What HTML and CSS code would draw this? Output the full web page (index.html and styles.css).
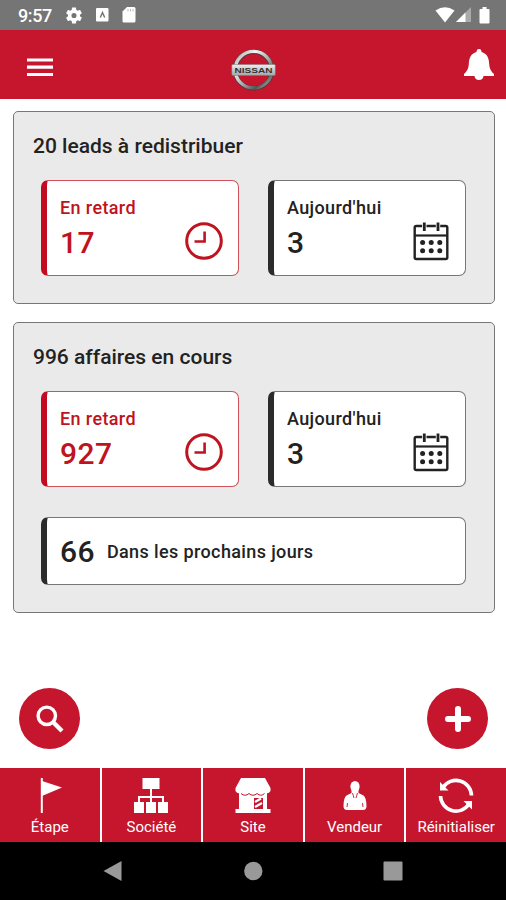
FILE: index.html
```
<!DOCTYPE html>
<html lang="fr">

<head>
    <meta charset="utf-8">
    <meta name="viewport" content="width=device-width, initial-scale=1.0">
    <title>Leads</title>
    <link rel="stylesheet" href="styles.css">
</head>

<body>
    <!-- shared icons -->
    <svg class="hide">
        <symbol id="clock" viewBox="0 0 38 38">
            <circle cx="19" cy="19" r="17.3" fill="none" stroke="currentColor" stroke-width="3" />
            <path d="M19.6 9.5V19.5H9.5" fill="none" stroke="currentColor" stroke-width="2.6" />
        </symbol>
        <symbol id="calendar" viewBox="0 0 36 39">
            <rect x="1.7" y="4" width="32.6" height="33" rx="1.5" fill="none" stroke="currentColor" stroke-width="2.4" />
            <path d="M2 13.5H34" stroke="currentColor" stroke-width="2.2" />
            <path d="M11.3 0V9M25 0V9" stroke="#fff" stroke-width="4.4" />
            <path d="M11.3 .5V9M25 .5V9" stroke="currentColor" stroke-width="2.8" />
            <g fill="currentColor">
                <circle cx="9.6" cy="20.5" r="2.5" />
                <circle cx="18.2" cy="20.5" r="2.5" />
                <circle cx="26.8" cy="20.5" r="2.5" />
                <circle cx="9.6" cy="28.7" r="2.5" />
                <circle cx="18.2" cy="28.7" r="2.5" />
                <circle cx="26.8" cy="28.7" r="2.5" />
            </g>
        </symbol>
    </svg>

    <div class="status">
        <span class="time">9:57</span>
        <svg class="gear" width="16" height="17" viewBox="2 2 20 20">
            <path fill="#fff" d="M19.43 12.98c.04-.32.07-.64.07-.98s-.03-.66-.07-.98l2.11-1.65c.19-.15.24-.42.12-.64l-2-3.46c-.12-.22-.39-.3-.61-.22l-2.49 1c-.52-.4-1.08-.73-1.69-.98l-.38-2.65C14.46 2.18 14.25 2 14 2h-4c-.25 0-.46.18-.49.42l-.38 2.65c-.61.25-1.17.59-1.69.98l-2.49-1c-.23-.09-.49 0-.61.22l-2 3.46c-.13.22-.07.49.12.64l2.11 1.65c-.04.32-.07.65-.07.98s.03.66.07.98l-2.11 1.65c-.19.15-.24.42-.12.64l2 3.46c.12.22.39.3.61.22l2.49-1c.52.4 1.08.73 1.69.98l.38 2.65c.03.24.24.42.49.42h4c.25 0 .46-.18.49-.42l.38-2.65c.61-.25 1.17-.59 1.69-.98l2.49 1c.23.09.49 0 .61-.22l2-3.46c.12-.22.07-.49-.12-.64l-2.11-1.65zM12 15.2a3.2 3.2 0 1 1 0-6.4 3.2 3.2 0 0 1 0 6.4z" />
        </svg>
        <svg class="keyboard" width="13" height="14" viewBox="0 0 13 14">
            <rect width="12.500" height="13.5" rx="1" fill="#fff" />
            <path d="M4.300 9.500L6.500 4.500L8.700 9.500" fill="none" stroke="#777" stroke-width="1.5" />
        </svg>
        <svg class="sd" width="14" height="16" viewBox="0 0 14 16">
            <path fill="#fff" d="M5 0H12Q13.5 0 13.5 1.5V14Q13.5 15.500 12 15.500H2Q.5 15.500 .5 14V4.500z" />
            <path d="M6 2V4.500M8.500 2V4.500M11 2V4.500" stroke="#bbb" />
        </svg>
        <svg class="wifi" width="20" height="16" viewBox="0 0 20 16">
            <path fill="#fff" d="M.5 3.500Q10-3 19.500 3.500L10 15.500z" />
        </svg>
        <svg class="signal" width="15" height="16" viewBox="0 0 15 16">
            <path fill="#aaa" d="M15 0V15H0z" />
            <path fill="#fff" d="M9.500 5.500V15H0z" />
        </svg>
        <svg class="battery" width="11" height="17" viewBox="0 0 11 17">
            <path fill="#fff" d="M3.500 0H7.500V2H9.500Q10.500 2 10.500 3V15.500Q10.500 16.500 9.500 16.500H1.500Q.5 16.500 .5 15.500V3Q.5 2 1.500 2H3.500z" />
        </svg>
    </div>

    <header class="header">
        <svg width="26" height="19" viewBox="0 0 26 19">
            <path d="M0 2H26M0 9.200H26M0 16.500H26" stroke="#fff" stroke-width="3.200" />
        </svg>
        <svg class="logo" width="46" height="42" viewBox="0 0 46 42">
            <defs>
                <linearGradient id="chrome" x1="0" y1="0" x2="1" y2="1">
                    <stop offset="0" stop-color="#999" />
                    <stop offset=".28" stop-color="#f5f5f5" />
                    <stop offset=".55" stop-color="#aaa" />
                    <stop offset=".78" stop-color="#555" />
                    <stop offset="1" stop-color="#ccc" />
                </linearGradient>
                <linearGradient id="plate" x1="0" y1="0" x2="0" y2="1">
                    <stop offset="0" stop-color="#eee" />
                    <stop offset="1" stop-color="#a5a5a5" />
                </linearGradient>
            </defs>
            <circle cx="22.500" cy="21" r="18.300" fill="none" stroke="#4b3a3c" stroke-width="4.600" />
            <circle cx="22.500" cy="20.700" r="18.300" fill="none" stroke="url(#chrome)" stroke-width="3.400" />
            <rect x=".8" y="15.500" width="43.500" height="11" rx="1" fill="url(#plate)" stroke="#777" stroke-width=".5" />
            <text x="22.500" y="23.900" text-anchor="middle" textLength="38" lengthAdjust="spacingAndGlyphs" class="brand">NISSAN</text>
        </svg>
        <svg class="bell" width="30" height="32" viewBox="0 0 30 32">
            <path fill="#fff" d="M15 0Q17.500 0 17.500 3C23 4.500 25 9 25.200 15C25.500 20 27 22 30 25V27H19.500Q19 31 15 31T10.500 27H0V25C3 22 4.500 20 4.800 15C5 9 7 4.500 12.500 3Q12.500 0 15 0z" />
        </svg>
    </header>

    <main class="content">
        <section class="panel">
            <h2>20 leads à redistribuer</h2>
            <div class="cards">
                <article class="card late">
                    <div>
                        <p class="label">En retard</p>
                        <p class="number">17</p>
                    </div>
                    <svg class="clock"><use href="#clock" /></svg>
                </article>
                <article class="card">
                    <div>
                        <p class="label">Aujourd'hui</p>
                        <p class="number">3</p>
                    </div>
                    <svg class="calendar"><use href="#calendar" /></svg>
                </article>
            </div>
        </section>

        <section class="panel">
            <h2>996 affaires en cours</h2>
            <div class="cards">
                <article class="card late">
                    <div>
                        <p class="label">En retard</p>
                        <p class="number">927</p>
                    </div>
                    <svg class="clock"><use href="#clock" /></svg>
                </article>
                <article class="card">
                    <div>
                        <p class="label">Aujourd'hui</p>
                        <p class="number">3</p>
                    </div>
                    <svg class="calendar"><use href="#calendar" /></svg>
                </article>
                <article class="card wide">
                    <p class="number">66</p>
                    <p class="label">Dans les prochains jours</p>
                </article>
            </div>
        </section>
    </main>

    <div class="actions">
        <button class="round">
            <svg width="28" height="28" viewBox="0 0 28 28" fill="none" stroke="#fff">
                <circle cx="10.800" cy="10.800" r="8.700" stroke-width="3.400" />
                <path d="M17 17L26 26" stroke-width="4.400" />
            </svg>
        </button>
        <button class="round">
            <svg width="26" height="26" viewBox="0 0 26 26">
                <path d="M13 3V23M3 13H23" stroke="#fff" stroke-width="6" stroke-linecap="round" />
            </svg>
        </button>
    </div>

    <nav class="menu">
        <a class="tab">
            <svg width="36" height="36" viewBox="0 0 36 36">
                <path d="M9.800 0V35" stroke="#fff" stroke-width="2" />
                <path d="M10 3L30 9.500L10 18z" fill="#fff" />
            </svg>
            Étape
        </a>
        <a class="tab">
            <svg width="36" height="36" viewBox="0 0 36 36">
                <path d="M9.500 0H26.500V11H9.500zM1 24H11V35H1zM13 24H23V35H13zM25 24H35V35H25z" fill="#fff" />
                <path d="M18 10V25M6 25V19H30V25" fill="none" stroke="#fff" stroke-width="2" />
            </svg>
            Société
        </a>
        <a class="tab">
            <svg width="36" height="36" viewBox="0 0 36 36">
                <path d="M6 0H30L35.500 10V13Q33 17 29.500 14Q26 18 22 14Q18 18 14 14Q10 18 6.500 14Q3 17 .5 13V10z" fill="#fff" />
                <path d="M4 14H32V31H35.500V35H.5V31H4z" fill="#fff" />
                <path d="M6 15.500Q10 19 14 15.500Q18 19 22 15.500Q26 19 29.500 15.500" fill="none" stroke="#c5162e" />
                <path d="M19 20H28V31H19z" fill="#c5162e" />
                <path d="M20 24L26 20.500M20 29L27 25" stroke="#fff" stroke-width="2.400" />
            </svg>
            Site
        </a>
        <a class="tab">
            <svg width="36" height="36" viewBox="0 0 36 36">
                <ellipse cx="18" cy="8.500" rx="4.600" ry="5.500" fill="#fff" />
                <path d="M14.500 11V15L9.500 17.500Q6.500 20 6.500 28Q6.500 32 10 32H26Q29.500 32 29.500 28Q29.500 20 26.500 17.500L21.500 15V11z" fill="#fff" />
                <path d="M15.500 15L17 20M20.500 15L19 20M10.500 25L10 29M25.500 25L26 29" stroke="#c5162e" stroke-width=".9" />
            </svg>
            Vendeur
        </a>
        <a class="tab">
            <svg width="36" height="36" viewBox="0 0 36 36">
                <path d="M5 9.500A15.500 15.500 0 0 1 33.500 17.500M31 26A15.500 15.500 0 0 1 2.500 18" fill="none" stroke="#fff" stroke-width="3.600" />
                <path d="M2 4V12.500H10.500zM34 31.500V23H25.500z" fill="#fff" />
            </svg>
            Réinitialiser
        </a>
    </nav>

    <footer class="system">
        <svg width="20" height="22" viewBox="0 0 20 22"><path d="M18.500 1V21L.5 11z" fill="#999" /></svg>
        <svg width="20" height="22" viewBox="0 0 20 22"><circle cx="10.300" cy="11" r="9.200" fill="#999" /></svg>
        <svg width="20" height="22" viewBox="0 0 20 22"><rect x=".5" y="1.500" width="19" height="19" rx="1" fill="#999" /></svg>
    </footer>
</body>

</html>
```

FILE: styles.css
```
* {
    box-sizing: border-box;
}

body {
    margin: 0;
    height: 900px;
    display: flex;
    flex-direction: column;
    background-color: #fff;
    color: #222;
    font-family: Roboto, sans-serif;
    font-weight: 500;
    overflow: hidden;
}

h2,
p {
    margin: 0;
    font-weight: 500;
}

svg {
    display: block;
    flex-shrink: 0;
}

.hide {
    display: none;
}

/* android status bar */
.status {
    height: 30px;
    padding: 0 16px 0 18px;
    display: flex;
    align-items: center;
    background-color: #757575;
    color: #fff;
}

.time {
    width: 48px;
    font-size: 18px;
    line-height: 30px;
    padding-top: 2px;
    letter-spacing: -0.4px;
}

.keyboard {
    margin-left: 14px;
}

.sd {
    margin-left: 13px;
}

.wifi {
    margin-left: auto;
}

.signal {
    margin-left: 1px;
}

.battery {
    margin-left: 8px;
}

.header {
    height: 69px;
    padding: 6px 12px 0 27px;
    display: flex;
    align-items: center;
    justify-content: space-between;
    background-color: #c5162e;
}

.logo {
    margin-right: 9px;
    margin-top: 5px;
}

.bell {
    margin-top: -6px;
}

.brand {
    font-family: "Liberation Sans", sans-serif;
    font-size: 8px;
    font-weight: bold;
    fill: #333;
}

.content {
    padding: 12px 11px 0 13px;
    display: flex;
    flex-direction: column;
    gap: 18px;
}

.panel {
    padding: 20px 28px 27px 27px;
    border: 1px solid #777;
    border-radius: 5px;
    background-color: #eaeaea;
}

.panel h2 {
    margin: 0 0 20px -8px;
    font-size: 21px;
    line-height: 28px;
}

.cards {
    display: grid;
    grid-template-columns: 1fr 1fr;
    gap: 30px 29px;
}

.card {
    height: 96px;
    padding: 0 15px 0 13px;
    display: flex;
    justify-content: space-between;
    border: 1px solid #777;
    border-left: 6px solid #2b2b2b;
    border-radius: 7px;
    background-color: #fff;
}

.late {
    border-color: #d0505c;
    border-left-color: #c20a20;
    color: #bf1320;
}

.label {
    padding-top: 15px;
    font-size: 18px;
    line-height: 24px;
    letter-spacing: 0.38px;
}

.number {
    font-size: 30px;
    line-height: 36px;
    padding-top: 5px;
    letter-spacing: 0.4px;
}

.clock {
    width: 38px;
    height: 38px;
    margin-top: 41px;
}

.calendar {
    width: 36px;
    height: 39px;
    margin: 41px 1px 0 0;
}

.wide {
    grid-column: 1 / 3;
    height: 68px;
    justify-content: flex-start;
    align-items: center;
    gap: 12px;
}

.wide .label,
.wide .number {
    padding-top: 2px;
}

.actions {
    margin-top: auto;
    padding: 0 18px 19px 19px;
    display: flex;
    justify-content: space-between;
}

.round {
    width: 61px;
    height: 61px;
    padding: 0;
    display: flex;
    align-items: center;
    justify-content: center;
    border: none;
    border-radius: 50%;
    background-color: #c5162e;
}

/* bottom menu */
.menu {
    height: 74px;
    display: grid;
    grid-template-columns: repeat(5, 1fr);
    gap: 2px;
}

.tab {
    padding-top: 10px;
    display: flex;
    flex-direction: column;
    align-items: center;
    background-color: #c5162e;
    color: #fff;
    font-size: 15px;
    font-weight: 400;
    line-height: 20px;
    min-width: 0;
}

.tab svg {
    margin-bottom: 3px;
}

.system {
    height: 58px;
    padding: 0 103px;
    display: flex;
    align-items: center;
    justify-content: space-between;
    background-color: #000;
}
```
